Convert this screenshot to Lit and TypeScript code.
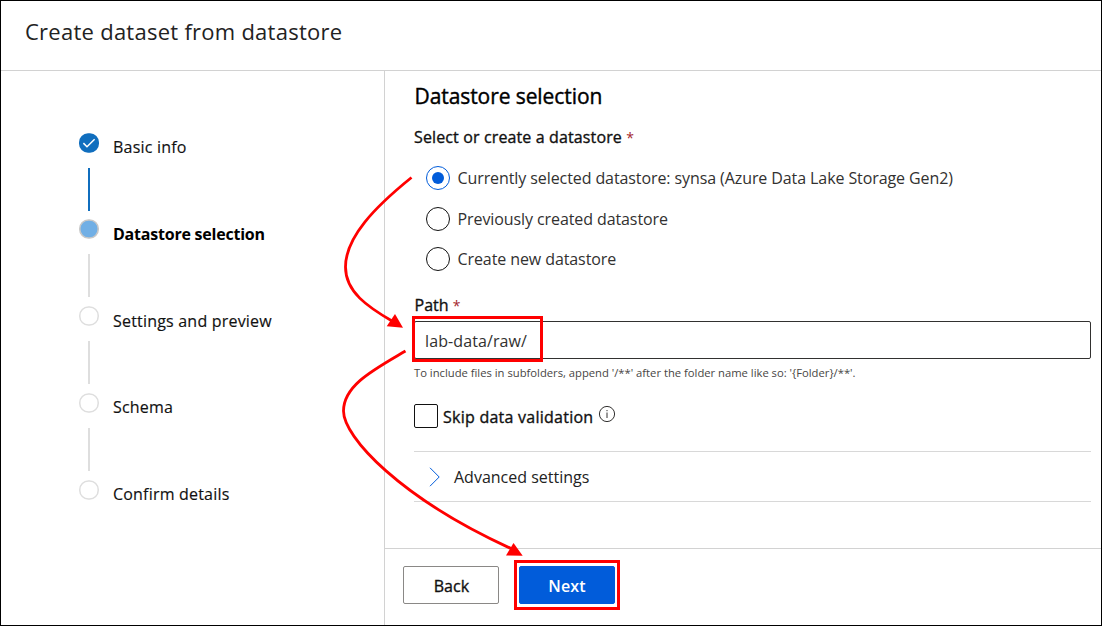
import { LitElement, html, css, svg } from "lit";
import { customElement, property, state } from "lit/decorators.js";
import { classMap } from "lit/directives/class-map.js";

type StepStatus = "done" | "current" | "todo";

@customElement("wizard-steps")
export class WizardSteps extends LitElement {
  static styles = css`
    :host { display: block; padding: 61.6px 0 0 77px; }
    .step { display: grid; grid-template-columns: 22px 1fr; column-gap: 13px; height: 86.8px; }
    .rail { display: flex; flex-direction: column; align-items: center; }
    .dot { display: block; width: 20px; height: 20px; }
    .line { width: 2px; height: 43px; margin-top: 15px; background: #dedede; }
    .line.done { background: #106ebe; }
    .label { font-size: 16px; line-height: 22px; letter-spacing: 0.2px; padding-top: 3.4px; color: #111; -webkit-text-stroke: 0.15px #111; }
    .label.current { font-weight: 700; letter-spacing: -0.22px; color: #000; -webkit-text-stroke: 0; }
  `;

  private steps: { label: string; status: StepStatus }[] = [
    { label: "Basic info", status: "done" },
    { label: "Datastore selection", status: "current" },
    { label: "Settings and preview", status: "todo" },
    { label: "Schema", status: "todo" },
    { label: "Confirm details", status: "todo" },
  ];

  private marker(status: StepStatus) {
    if (status === "done") {
      return svg`<rect x="0" y="0.3" width="20" height="19.4" rx="9" fill="#106ebe"/>
        <path d="M4.4 10.1 L8 13.7 L15.6 6.3" fill="none" stroke="#fff" stroke-width="1.5"/>`;
    }
    return status === "current"
      ? svg`<rect x="0.8" y="1" width="18.4" height="18" rx="8.6" fill="#71afe5" stroke="#c8c8c8" stroke-width="1.6"/>`
      : svg`<rect x="0.8" y="1" width="18.4" height="18" rx="8.6" fill="#fff" stroke="#dedede" stroke-width="1.5"/>`;
  }

  render() {
    return this.steps.map(
      (s, i) => html`<div class="step">
        <div class="rail">
          <svg class="dot" viewBox="0 0 20 20">${this.marker(s.status)}</svg>
          ${i < this.steps.length - 1
            ? html`<div class=${classMap({ line: true, done: s.status === "done" })}></div>`
            : ""}
        </div>
        <div class=${classMap({ label: true, current: s.status === "current" })}>${s.label}</div>
      </div>`
    );
  }
}

@customElement("radio-option")
export class RadioOption extends LitElement {
  static styles = css`
    :host { display: flex; align-items: center; gap: 7.5px; height: 24px; cursor: pointer; }
    .ring { box-sizing: border-box; width: 24px; height: 24px; border: 1.3px solid #111; border-radius: 50%; display: grid; place-items: center; }
    .ring.on { border-color: #015cda; }
    .ring.on::after { content: ""; width: 12px; height: 12px; border-radius: 50%; background: #015cda; }
    .text { font-size: 16px; line-height: 22px; letter-spacing: -0.09px; color: #323130; }
  `;
  @property() label = "";
  @property({ type: Boolean }) checked = false;

  render() {
    return html`<span class=${classMap({ ring: true, on: this.checked })}></span><span class="text">${this.label}</span>`;
  }
}

@customElement("app-root")
export class AppRoot extends LitElement {
  static styles = css`
    :host { display: block; font-family: "Open Sans", "Noto Sans", sans-serif; color: #111; }
    .frame { position: relative; box-sizing: border-box; width: 1102px; height: 626px; border: 1px solid #000; background: #fff; display: grid; grid-template-rows: 70px 1fr; overflow: hidden; }
    .header { box-sizing: border-box; border-bottom: 1px solid #d2d2d2; padding: 15px 0 0 24px; }
    .title { margin: 0; font-size: 22px; line-height: 30px; font-weight: 400; letter-spacing: 0.26px; color: #222; }
    .body { display: grid; grid-template-columns: 383px 1fr; min-height: 0; }
    .main { border-left: 1px solid #d2d2d2; display: grid; grid-template-rows: 477px 1fr; min-height: 0; }
    .content { padding: 10px 10px 0 29px; }
    .medium { font-weight: 400; color: #111; -webkit-text-stroke: 0.35px #111; }
    .h2 { margin: 0; font-size: 21px; line-height: 30px; padding-left: 0.5px; letter-spacing: -0.08px; -webkit-text-stroke: 0.4px #000; color: #000; }
    .field { font-size: 16px; line-height: 22px; }
    .datastore { margin-top: 15px; letter-spacing: 0.13px; }
    .req { color: #a4262c; font-size: 14px; line-height: 1; -webkit-text-stroke: 0; }
    .radios { display: flex; flex-direction: column; padding: 18px 0 0 12px; }
    .second { margin-top: 17px; }
    .third { margin-top: 16px; }
    .path { margin-top: 23px; padding-left: 0.5px; }
    .input { box-sizing: border-box; height: 38px; margin-top: 5px; border: 1px solid #323130; border-radius: 2px; padding: 2px 10px 0; display: flex; align-items: center; font-size: 16px; letter-spacing: 0.1px; color: #323130; }
    .hint { margin-top: 6px; font-size: 11.25px; line-height: 16px; letter-spacing: -0.01px; color: #484644; white-space: nowrap; }
    .check { display: flex; align-items: center; height: 24px; margin-top: 23px; }
    .box { box-sizing: border-box; width: 24px; height: 24px; border: 1px solid #111; border-radius: 2px; margin-right: 5px; }
    .skip { letter-spacing: 0.25px; padding-top: 1px; }
    .info { width: 18px; height: 18px; margin: -5px 0 0 5px; }
    .advanced { box-sizing: border-box; height: 51px; margin-top: 23px; border: solid #d8d8d8; border-width: 1px 0; display: flex; align-items: center; padding-left: 15px; font-size: 16px; color: #222; }
    .chevron { width: 12px; height: 20px; margin-right: 13px; }
    .footer { border-top: 1px solid #d2d2d2; padding: 17px 0 0 18px; display: flex; gap: 20px; align-items: flex-start; }
    .btn { box-sizing: border-box; width: 96px; height: 38px; border: 1px solid #8a8886; border-radius: 2px; background: #fff; font: 400 16px "Open Sans", sans-serif; letter-spacing: 0.1px; padding: 2px 0 0 1px; }
    .primary { background: #015cda; border-color: #015cda; color: #fff; font-weight: 600; padding-left: 0; -webkit-text-stroke: 0; }
    .marks { position: absolute; left: -1px; top: -1px; width: 1102px; height: 626px; pointer-events: none; }
  `;

  @state() private selected = 0;

  private pick(i: number) {
    this.selected = i;
  }

  render() {
    return html`<div class="frame">
      <header class="header"><h1 class="title">Create dataset from datastore</h1></header>
      <div class="body">
        <wizard-steps></wizard-steps>
        <div class="main">
          <section class="content">
            <h2 class="h2 medium">Datastore selection</h2>
            <div class="field medium datastore">Select or create a datastore <span class="req">*</span></div>
            <div class="radios">
              <radio-option label="Currently selected datastore: synsa (Azure Data Lake Storage Gen2)" ?checked=${this.selected === 0} @click=${() => this.pick(0)}></radio-option>
              <radio-option class="second" label="Previously created datastore" ?checked=${this.selected === 1} @click=${() => this.pick(1)}></radio-option>
              <radio-option class="third" label="Create new datastore" ?checked=${this.selected === 2} @click=${() => this.pick(2)}></radio-option>
            </div>
            <div class="field medium path">Path <span class="req">*</span></div>
            <div class="input">lab-data/raw/</div>
            <div class="hint">To include files in subfolders, append '/**' after the folder name like so: '{Folder}/**'.</div>
            <div class="check">
              <span class="box"></span><span class="field medium skip">Skip data validation</span>
              <svg class="info" viewBox="0 0 18 18" fill="none" stroke="#323130">
                <circle cx="9" cy="9" r="7.6" />
                <path d="M9 7.5V13M9 5V6.2" />
              </svg>
            </div>
            <div class="advanced">
              <svg class="chevron" viewBox="0 0 12 20" fill="none" stroke="#015cda"><path d="M1 0.8L10.2 10L1 19.2" /></svg>
              <span>Advanced settings</span>
            </div>
          </section>
          <footer class="footer">
            <button class="btn medium">Back</button>
            <button class="btn medium primary">Next</button>
          </footer>
        </div>
      </div>
      <svg class="marks" viewBox="0 0 1102 626" fill="none" stroke="#f00" stroke-width="3">
        <rect x="413.5" y="317.5" width="128" height="43" />
        <rect x="515.5" y="561.5" width="103" height="47" />
        <path stroke-width="2.8" d="M411.5 177.5C375 207 345.5 237 345.5 267C345.5 292 368 307 392 321" />
        <path stroke-width="2.8" d="M405.5 351C375 369 343.5 385 343.5 411C343.5 437 400 498 512 549" />
        <path d="M395 314L403 327.7L386.7 326.3Z" fill="#f00" stroke="none" />
        <path d="M513.5 543L522.7 555.8L506 555.5Z" fill="#f00" stroke="none" />
      </svg>
    </div>`;
  }
}
